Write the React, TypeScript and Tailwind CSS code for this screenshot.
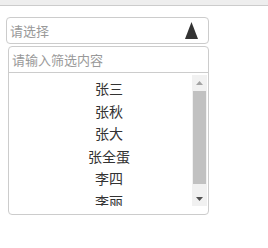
const names = ['张三', '张秋', '张大', '张全蛋', '李四', '李丽'];

function ScrollBar() {
  return (
    <div className="w-[15px] h-[131px] bg-[#f1f1f1] flex flex-col">
      <div className="h-[15px] flex items-center justify-center">
        <svg width="7" height="4" viewBox="0 0 7 4">
          <polygon points="3.5,0 7,4 0,4" fill="#a3a3a3" />
        </svg>
      </div>
      <div className="mt-[1px] mx-[1px] h-[93px] bg-[#c1c1c1]" />
      <div className="flex-1" />
      <div className="h-[15px] flex items-center justify-center">
        <svg width="7" height="4" viewBox="0 0 7 4">
          <polygon points="0,0 7,0 3.5,4" fill="#505050" />
        </svg>
      </div>
    </div>
  );
}

export default function App() {
  return (
    <div className="w-[268px] h-[248px] bg-white" style={{ fontFamily: '"Noto Sans CJK SC", "Noto Sans", sans-serif' }}>
      <div className="h-[6px] bg-[#eeeeee] border-b border-[#cccccc]" />
      <div className="mt-[11px] ml-[6px] w-[203px] h-[27px] rounded-[4px] border border-[#cccccc] flex items-center justify-between pl-[3px] pr-[10px]">
        <span className="text-[13px] text-[#999999]">请选择</span>
        <svg width="13" height="17" viewBox="0 0 13 17">
          <polygon points="6.5,0 13,17 0,17" fill="#333333" />
        </svg>
      </div>
      <div className="mt-[2px] ml-[8px] w-[201px] h-[169px] rounded-[4px] border border-[#cccccc] flex flex-col">
        <div className="h-[26px] border-b border-[#cccccc] flex items-center pl-[3px]">
          <span className="text-[13px] text-[#999999]">请输入筛选内容</span>
        </div>
        <div className="mt-[2px] mr-[1px] flex">
          <ul className="flex-1 h-[131px] overflow-hidden pt-[2px] pl-[17px]">
            {names.map((n) => (
              <li key={n} className="h-[22.6px] leading-[22.6px] text-center text-[14px] text-[#333333]">{n}</li>
            ))}
          </ul>
          <ScrollBar />
        </div>
      </div>
    </div>
  );
}
